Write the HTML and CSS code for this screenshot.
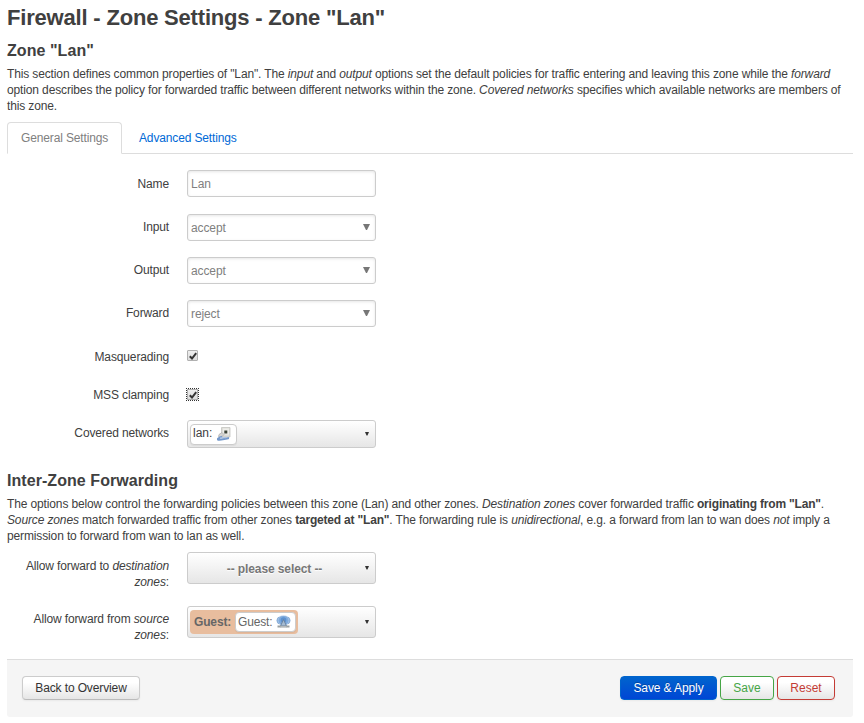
FILE: index.html
```html
<!DOCTYPE html>
<html lang="en">
<head>
<meta charset="utf-8">
<title>Firewall - Zone Settings</title>
<link rel="stylesheet" href="styles.css">
</head>
<body>
<main class="page">
  <h2>Firewall - Zone Settings - Zone "Lan"</h2>
  <section class="zone">
    <h3>Zone "Lan"</h3>
    <p class="descr">This section defines common properties of "Lan". The <em>input</em> and <em>output</em> options set the default policies for traffic entering and leaving this zone while the <em>forward</em><br>option describes the policy for forwarded traffic between different networks within the zone. <em>Covered networks</em> specifies which available networks are members of<br>this zone.</p>
    <nav class="tabs"><a class="tab active">General Settings</a><a class="tab">Advanced Settings</a></nav>
    <div class="row"><label>Name</label><div class="field text">Lan</div></div>
    <div class="row"><label>Input</label><div class="field select"><span>accept</span><svg class="caret" viewBox="0 0 7 6"><path d="M0 0h7L4 6H3z"/></svg></div></div>
    <div class="row"><label>Output</label><div class="field select"><span>accept</span><svg class="caret" viewBox="0 0 7 6"><path d="M0 0h7L4 6H3z"/></svg></div></div>
    <div class="row tall"><label>Forward</label><div class="field select"><span>reject</span><svg class="caret" viewBox="0 0 7 6"><path d="M0 0h7L4 6H3z"/></svg></div></div>
    <div class="row short"><label>Masquerading</label><div class="check"><svg viewBox="0 0 8 8"><path d="M.8 4.2 3 6.5 7.2 1.2"/></svg></div></div>
    <div class="row short"><label>MSS clamping</label><div class="check focus"><svg viewBox="0 0 8 8"><path d="M.8 4.2 3 6.5 7.2 1.2"/></svg></div></div>
    <div class="row last"><label>Covered networks</label>
      <div class="drop small"><span class="badge">lan:
        <svg class="port" viewBox="0 0 14 14"><path d="M4.500.5h8.500v9.500h-8.500z" fill="#ddddd7" stroke="#c4c4c0" stroke-width=".8"/><path d="M6 1.500h6v6H6z" fill="#eeeeea"/><path d="M7.300 3.500h3v3h-3z" fill="#3c4437"/><path d="M2 7.500 5 5.500l2 2-3 3-2.500-1z" fill="#d5d5d2" stroke="#aaa" stroke-width=".7"/><path d="M5 9.500C1.500 11 0 12 1 12.600c2 .8 6-.8 11-1.600" fill="none" stroke="#7398cb" stroke-width="1.900"/><path d="M3 10.800h6" stroke="#a3bee3"/></svg></span><svg class="arrow" viewBox="0 0 4 4"><path d="M0 0h4L2.500 3.500h-1z"/></svg></div></div>
  </section>
  <section>
    <h3>Inter-Zone Forwarding</h3>
    <p class="descr">The options below control the forwarding policies between this zone (Lan) and other zones. <em>Destination zones</em> cover forwarded traffic <b>originating from "Lan"</b>.<br><em>Source zones</em> match forwarded traffic from other zones <b>targeted at "Lan"</b>. The forwarding rule is <em>unidirectional</em>, e.g. a forward from lan to wan does <em>not</em> imply a<br>permission to forward from wan to lan as well.</p>
    <div class="row forward dest"><label>Allow forward to <em>destination<br>zones</em>:</label><div class="drop"><span class="placeholder">-- please select --</span><svg class="arrow" viewBox="0 0 4 4"><path d="M0 0h4L2.500 3.500h-1z"/></svg></div></div>
    <div class="row forward"><label>Allow forward from <em>source<br>zones</em>:</label><div class="drop"><span class="zonebadge"><b>Guest:</b><span class="badge inner">Guest:
      <svg class="wifi" viewBox="0 0 15 14"><ellipse cx="7.500" cy="5.500" rx="7" ry="5" fill="#a9c6e8"/><ellipse cx="7.500" cy="5.500" rx="5" ry="4.500" fill="#7eaadd"/><path d="M2.800 2c-2 2-2 5 0 7M12.200 2c2 2 2 5 0 7" fill="none" stroke="#82a8d3"/><circle cx="7.500" cy="5" r="2.800" fill="#5c91d0"/><path d="M7.500 4.500 4.500 11h6z" fill="#a5bbd2" stroke="#697f97" stroke-width=".9"/><path d="M1.500 10.500h3.500v2H1.500zm8.500 0h3.500v2H10z" fill="#999fa2"/><path d="M4.500 11h6v1.700h-6z" fill="#b3b8ba"/></svg></span></span><svg class="arrow" viewBox="0 0 4 4"><path d="M0 0h4L2.500 3.500h-1z"/></svg></div></div>
  </section>
  <footer class="actions"><button class="btn back">Back to Overview</button><button class="btn apply">Save &amp; Apply</button><button class="btn save">Save</button><button class="btn reset">Reset</button></footer>
</main>
</body>
</html>
```

FILE: styles.css
```css
* { box-sizing: border-box; }
body { margin: 0; background: #fff; color: #404040; font: 12px/16px "Liberation Sans", Arial, sans-serif; }
.page { width: 846px; margin-left: 7px; }
h2, h3, p { margin: 0; white-space: nowrap; }
h2 { font-size: 22px; line-height: 35px; height: 36px; letter-spacing: -.19px; }
h3 { font-size: 16px; line-height: 30px; height: 30px; letter-spacing: .06px; }
.descr { height: 48px; letter-spacing: -.132px; }
.descr b { letter-spacing: -.19px; }
.tabs { display: flex; height: 32px; margin: 8px 0 16px; border-bottom: 1px solid #ddd; letter-spacing: -.14px; }
.tab { height: 32px; padding: 7px 13px; margin-right: 3px; border: 1px solid transparent; color: #0069d6; white-space: nowrap; }
.tab.active { width: 115px; border-color: #ddd #ddd #fff; border-radius: 4px 4px 0 0; background: #fff; color: #808080; }
.zone { height: 430px; }
.row { display: flex; height: 43px; }
.row.tall { height: 44px; }
.row.short { height: 38px; }
.row label { width: 162px; padding-top: 6px; margin-right: 18px; text-align: right; white-space: nowrap; letter-spacing: -.13px; }
.field { width: 189px; height: 27px; border: 1px solid #ccc; border-radius: 3px; padding: 1px 3px 0; line-height: 25px; color: #808080; box-shadow: inset 0 1px 3px rgba(0,0,0,.1); }
.select { display: flex; justify-content: space-between; margin-top: 1px; padding: 1px 5px 0 3px; letter-spacing: -.1px; }
.caret { width: 7px; height: 6px; margin-top: 8px; fill: #777; }
.check { width: 11px; height: 11px; margin: 7px 0 0; border: 1px solid #b0b0b0; border-radius: 1px; background: linear-gradient(#eee, #ddd); display: flex; align-items: center; justify-content: center; }
.check svg { width: 8px; height: 8px; fill: none; stroke: #333; stroke-width: 2; }
.check.focus { margin-top: 8px; border-radius: 0; outline: 1px dotted #333; }
.drop { display: flex; align-items: center; justify-content: space-between; width: 189px; height: 32px; border: 1px solid #ccc; border-radius: 3px; padding: 0 6px 0 2px; background: linear-gradient(#fff, #e6e6e6); }
.drop.small { height: 28px; margin-top: 1px; }
.arrow { width: 4px; height: 4px; fill: #333; }
.badge { display: flex; align-items: center; gap: 5px; width: 47px; height: 21px; padding: 0 4px 1px 2px; border: 1px solid #ccc; border-radius: 4px; background: #fff; white-space: nowrap; box-shadow: 0 1px 1px rgba(0,0,0,.05); }
.small .badge { padding-bottom: 3px; }
.port { width: 14px; height: 14px; flex: none; margin-top: 3px; }
.wifi { width: 15px; height: 14px; flex: none; }
.placeholder { width: 169px; text-align: center; font-weight: bold; color: #777; text-shadow: 0 1px 1px #fff; letter-spacing: -.1px; padding-top: 1px; }
.forward { height: 54px; }
.dest { margin-top: 8px; height: 54px; }
.forward label { padding-top: 6px; }
.forward:not(.dest) label { padding-top: 5px; }
.zonebadge { display: flex; align-items: center; width: 108px; height: 24px; padding: 0 2px 0 4px; border-radius: 4px; background: #e8bd9e; color: #666; letter-spacing: -.15px; }
.zonebadge b { width: 41px; line-height: 22px; }
.inner { width: 61px; height: 20px; gap: 4px; padding-left: 2px; }
.actions { display: flex; gap: 3px; height: 58px; margin-top: -1px; padding: 16px 18px 17px 15px; background: #f5f5f5; border-top: 1px solid #ddd; border-radius: 0 0 3px 3px; }
.btn { height: 24px; padding: 0 12px; border: 1px solid #ccc; border-bottom-color: #bbb; border-radius: 4px; background: linear-gradient(#fff 25%, #e6e6e6); color: #333; font: 12px/16px "Liberation Sans", Arial, sans-serif; white-space: nowrap; box-shadow: 0 1px 2px rgba(0,0,0,.05); }
.back { width: 118px; margin-right: auto; letter-spacing: -.12px; }
.apply { width: 97px; color: #fff; border-color: #0064cd; background: linear-gradient(#0064cd, #0046d5); text-shadow: 0 -1px 0 rgba(0,0,0,.25); letter-spacing: -.1px; }
.save { width: 54px; color: #46a546; border-color: #46a546; }
.reset { width: 58px; color: #c43c35; border-color: #c43c35; }
```
